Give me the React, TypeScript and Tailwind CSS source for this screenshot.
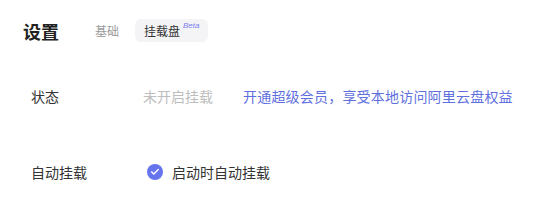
import { Check } from 'lucide-react';

export default function App() {
  return (
    <div
      className="w-[557px] h-[215px] bg-white text-[#333]"
      style={{ fontFamily: '"Noto Sans CJK SC", "Noto Sans", sans-serif' }}
    >
      {/* Header */}
      <div className="flex items-center pl-[23px] pt-[19px] h-[42px]">
        <h1 className="text-[18px] font-bold text-[#222] leading-none">设置</h1>
        <span className="ml-[36px] text-[12px] text-[#9a9a9a] leading-none">基础</span>
        <div className="ml-[16px] h-[23px] w-[73px] rounded-md bg-[#f4f4f6] flex items-center pl-[9px] relative">
          <span className="text-[12px] text-[#333] leading-none">挂载盘</span>
          <span className="absolute left-[48px] top-[3px] text-[8px] italic text-[#7a7cf0] leading-none font-[Arial]">
            Beta
          </span>
        </div>
      </div>

      {/* Rows */}
      <div className="pl-[31px] pt-[43px] text-[14px]">
        <div className="flex items-center h-[22px]">
          <span className="w-[112px]">状态</span>
          <span className="text-[#bdbdbd]">未开启挂载</span>
          <span className="ml-[30px] tracking-[0.2px] text-[#5f70de]">开通超级会员，享受本地访问阿里云盘权益</span>
        </div>
        <div className="flex items-center h-[22px] mt-[54px]">
          <span className="w-[116px]">自动挂载</span>
          <span className="w-[16px] h-[16px] rounded-full bg-[#6674ee] flex items-center justify-center">
            <Check size={10} strokeWidth={3.5} className="text-white" />
          </span>
          <span className="ml-[9px]">启动时自动挂载</span>
        </div>
      </div>
    </div>
  );
}
